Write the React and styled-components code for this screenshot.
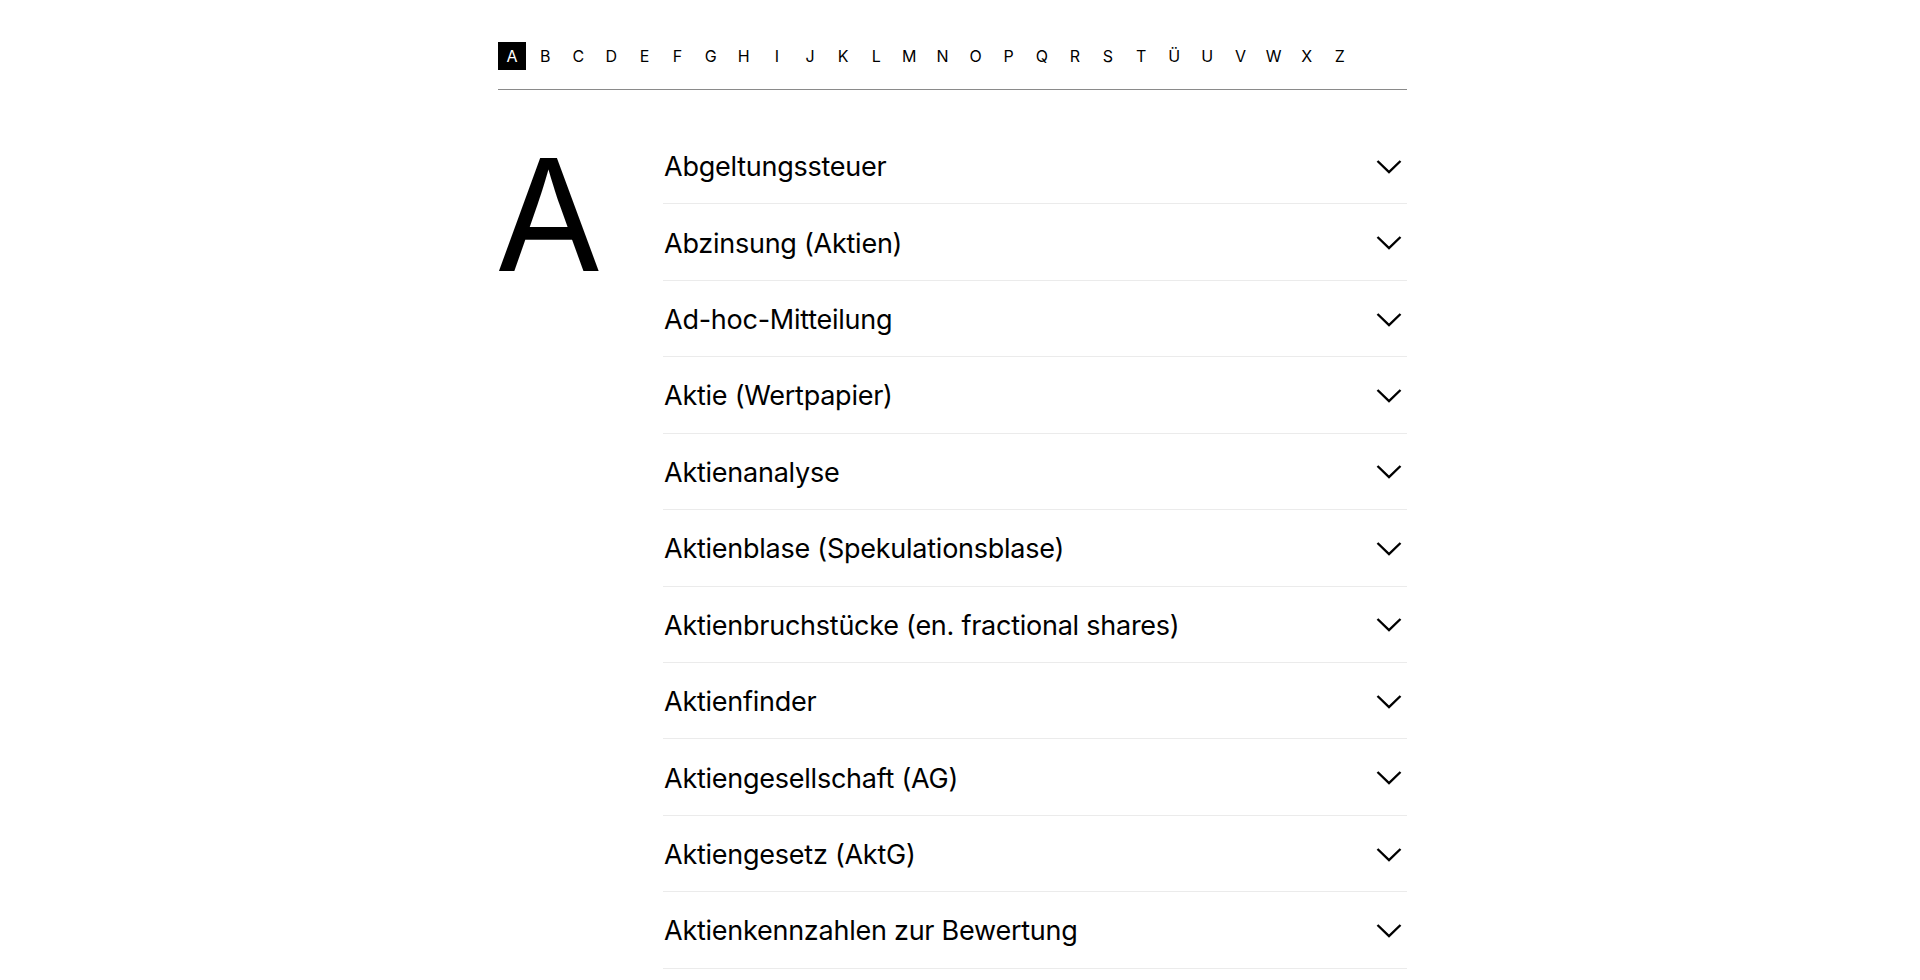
import React from 'react'
import styled, { createGlobalStyle } from 'styled-components'

const letters = ['A', 'B', 'C', 'D', 'E', 'F', 'G', 'H', 'I', 'J', 'K', 'L', 'M', 'N', 'O', 'P', 'Q', 'R', 'S', 'T', 'Ü', 'U', 'V', 'W', 'X', 'Z']

const terms = [
  'Abgeltungssteuer',
  'Abzinsung (Aktien)',
  'Ad-hoc-Mitteilung',
  'Aktie (Wertpapier)',
  'Aktienanalyse',
  'Aktienblase (Spekulationsblase)',
  'Aktienbruchstücke (en. fractional shares)',
  'Aktienfinder',
  'Aktiengesellschaft (AG)',
  'Aktiengesetz (AktG)',
  'Aktienkennzahlen zur Bewertung',
]

const GlobalStyle = createGlobalStyle`
  html, body {
    margin: 0;
    background: #fff;
    color: #000;
    font-family: Inter, "Noto Sans", sans-serif;
    overflow: hidden;
  }
`

const Chevron = () => (
  <svg width="26" height="16" viewBox="0 0 26 16" fill="none">
    <path d="M1.5 2 L13 13 L24.5 2" stroke="#000" strokeWidth="2.4" />
  </svg>
)

const App = () => {
  return (
    <Page>
      <GlobalStyle />
      <LetterNav>
        {letters.map((l) => (
          <LetterLink key={l} active={l === 'A'}>{l}</LetterLink>
        ))}
      </LetterNav>
      <Section>
        <BigLetter>A</BigLetter>
        <List>
          {terms.map((t) => (
            <Row key={t}>
              <Term>{t}</Term>
              <Chevron />
            </Row>
          ))}
        </List>
      </Section>
    </Page>
  )
}

// page column
const Page = styled.div`
  width: 909px;
  margin-left: 498px;
  padding-top: 42px;
  height: 980px;
  box-sizing: border-box;
`

// alphabet bar
const LetterNav = styled.nav`
  display: flex;
  gap: 5.12px;
  padding-bottom: 19px;
  border-bottom: 1.5px solid #8a8a8a;
`

const LetterLink = styled.a`
  width: 28px;
  height: 28px;
  display: flex;
  align-items: center;
  justify-content: center;
  font-size: 16px;
  font-weight: 400;
  background: ${(p) => (p.active ? '#000' : 'transparent')};
  color: ${(p) => (p.active ? '#fff' : '#000')};
  cursor: pointer;
`

const Section = styled.section`
  display: grid;
  grid-template-columns: 165px 1fr;
  padding-top: 38px;
`

const BigLetter = styled.div`
  font-size: 156px;
  font-weight: 400;
  line-height: 1;
  margin-top: 9px;
  margin-left: -3px;
`

const List = styled.ul`
  list-style: none;
  margin: 0;
  padding: 0;
`

const Row = styled.li`
  box-sizing: border-box;
  height: 76.43px;
  border-bottom: 1px solid #ebebeb;
  display: flex;
  align-items: center;
  justify-content: space-between;
  padding: 2px 5px 0 1px;
`

const Term = styled.span`
  font-size: 27px;
  font-weight: 410;
  letter-spacing: -0.25px;
`

export default App
